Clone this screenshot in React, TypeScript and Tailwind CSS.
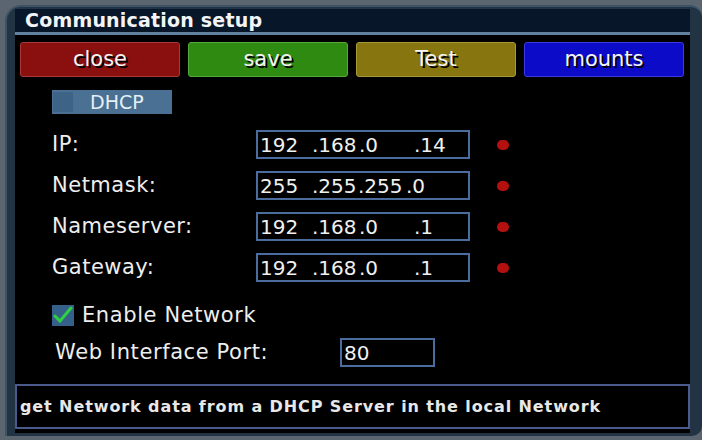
import React from 'react';

type IpRow = {
  label: string;
  parts: string[];
  widths: string[];
};

const rows: IpRow[] = [
  { label: 'IP:', parts: ['192', '.168', '.0', '.14'], widths: ['w-[52px]', 'w-[47px]', 'w-[55px]', 'w-auto'] },
  { label: 'Netmask:', parts: ['255', '.255', '.255', '.0'], widths: ['w-[52px]', 'w-[46px]', 'w-[48px]', 'w-auto'] },
  { label: 'Nameserver:', parts: ['192', '.168', '.0', '.1'], widths: ['w-[52px]', 'w-[47px]', 'w-[55px]', 'w-auto'] },
  { label: 'Gateway:', parts: ['192', '.168', '.0', '.1'], widths: ['w-[52px]', 'w-[47px]', 'w-[55px]', 'w-auto'] },
];

const buttons = [
  { label: 'close', cls: 'bg-[#8a1010] border-[#a83a3a]' },
  { label: 'save', cls: 'bg-[#2f8a12] border-[#55a83a]' },
  { label: 'Test', cls: 'bg-[#877510] border-[#a8983a]' },
  { label: 'mounts', cls: 'bg-[#0c0cc8] border-[#3a3ae0]' },
];

const font = { fontFamily: '"DejaVu Sans", "Liberation Sans", sans-serif' };

const App: React.FC = () => {
  return (
    <div className="w-[702px] h-[440px] overflow-hidden bg-[#5b6570] pl-[5px] pt-[5px]" style={font}>
      <div className="w-[697px] h-[431px] flex flex-col rounded-tl-[16px] rounded-tr-[12px] rounded-br-[10px] bg-[#223444] border-t-[2px] border-l-[2px] border-[#3c5366] pl-[8px] pr-[12px] pb-[3px]">
        {/* title */}
        <div className="h-[24px] mt-[1px] bg-[#08162a] flex items-center px-[10px] border-t border-[#22344a]">
          <span className="text-[19px] font-bold text-[#f2f4f6] leading-none tracking-[0.2px]">Communication setup</span>
        </div>
        <div className="h-[3px] bg-[#6282a0]" />

        <div className="flex-1 flex flex-col bg-black">
          {/* buttons */}
          <div className="flex gap-[8px] px-[5px] mt-[7px]">
            {buttons.map((b) => (
              <div
                key={b.label}
                className={`w-[160px] h-[35px] rounded-[3px] border flex items-center justify-center ${b.cls}`}
              >
                <span className="text-[21px] leading-none text-[#f4f4f4] [text-shadow:2px_2px_0_#000]">{b.label}</span>
              </div>
            ))}
          </div>

          {/* DHCP toggle */}
          <div className="ml-[37px] mt-[13px] w-[120px] h-[24px] bg-[#4a7093] flex items-center">
            <div className="w-[20px] h-[20px] ml-[1px] bg-[#3d6386]" />
            <span className="ml-[17px] text-[19px] leading-none text-[#e6eef6]">DHCP</span>
          </div>

          {/* ip rows */}
          <div className="flex flex-col gap-[12px] mt-[16px]">
            {rows.map((r) => (
              <div key={r.label} className="flex items-center h-[29px]">
                <div className="w-[241px] pl-[37px] text-[21px] leading-none text-[#eeeeee] tracking-[0.5px]">{r.label}</div>
                <div className="w-[214px] h-[29px] border-2 border-[#4b6d9e] flex items-center pl-[2px] text-[20px] leading-none text-[#f0f0f0]">
                  {r.parts.map((p, i) => (
                    <span key={i} className={`inline-block ${r.widths[i]}`}>{p}</span>
                  ))}
                </div>
                <div className="ml-[27px] w-[12px] h-[10px] rounded-full bg-[#b41010]" />
              </div>
            ))}
          </div>

          {/* enable network */}
          <div className="flex items-center ml-[37px] mt-[22px] h-[22px]">
            <div className="w-[22px] h-[21px] bg-[#35608a] flex items-center justify-center">
              <svg width="20" height="18" viewBox="0 0 20 18">
                <path d="M2 10 L7 15 L18 2" stroke="#2fd040" strokeWidth="3" fill="none" strokeLinecap="round" />
              </svg>
            </div>
            <span className="ml-[8px] text-[21px] leading-none text-[#eeeeee] tracking-[0.6px]">Enable Network</span>
          </div>

          {/* port */}
          <div className="flex items-center mt-[12px] h-[29px]">
            <div className="w-[325px] pl-[40px] text-[21px] leading-none text-[#eeeeee] tracking-[0.6px]">Web Interface Port:</div>
            <div className="w-[95px] h-[29px] border-2 border-[#4b6d9e] flex items-center pl-[2px] text-[20px] leading-none text-[#f0f0f0]">
              80
            </div>
          </div>

          {/* status */}
          <div className="mt-[17px] h-[45px] border-2 border-[#4a5a8c] flex items-center pl-[3px]">
            <span className="text-[16px] font-bold leading-none text-[#e8e8e8] tracking-[0.9px]">
              get Network data from a DHCP Server in the local Network
            </span>
          </div>
        </div>
      </div>
    </div>
  );
};

export default App;
